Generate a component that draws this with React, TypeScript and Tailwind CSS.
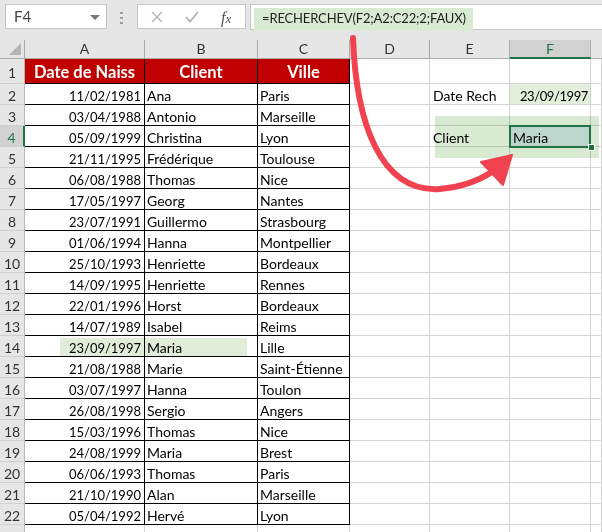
import React from "react";

const rows: [string, string, string][] = [
  ["11/02/1981", "Ana", "Paris"],
  ["03/04/1988", "Antonio", "Marseille"],
  ["05/09/1999", "Christina", "Lyon"],
  ["21/11/1995", "Frédérique", "Toulouse"],
  ["06/08/1988", "Thomas", "Nice"],
  ["17/05/1997", "Georg", "Nantes"],
  ["23/07/1991", "Guillermo", "Strasbourg"],
  ["01/06/1994", "Hanna", "Montpellier"],
  ["25/10/1993", "Henriette", "Bordeaux"],
  ["14/09/1995", "Henriette", "Rennes"],
  ["22/01/1996", "Horst", "Bordeaux"],
  ["14/07/1989", "Isabel", "Reims"],
  ["23/09/1997", "Maria", "Lille"],
  ["21/08/1988", "Marie", "Saint-Étienne"],
  ["03/07/1997", "Hanna", "Toulon"],
  ["26/08/1998", "Sergio", "Angers"],
  ["15/03/1996", "Thomas", "Nice"],
  ["24/08/1999", "Maria", "Brest"],
  ["06/06/1993", "Thomas", "Paris"],
  ["21/10/1990", "Alan", "Marseille"],
  ["05/04/1992", "Hervé", "Lyon"],
];

const font = { fontFamily: "Lato, 'Open Sans', sans-serif" };

function RowHeader({ n, h, label = true }: { n: number; h: string; label?: boolean }) {
  const sel = n === 4;
  return (
    <div
      className={`${h} w-[25px] shrink-0 flex items-end justify-center text-[14px] leading-[16px] border-b border-b-[#d0d0d0] ${
        sel
          ? "bg-[#d2d2d2] text-[#217346] border-r-2 border-r-[#217346]"
          : "bg-[#e6e6e6] text-[#333] border-r border-r-[#b8b8b8]"
      }`}
    >
      {label ? n : null}
    </div>
  );
}

function Gray({
  w,
  children,
  cls = "",
  size = "text-[14px]",
}: {
  w: string;
  children?: React.ReactNode;
  cls?: string;
  size?: string;
}) {
  return (
    <div
      className={`${w} shrink-0 h-full border-r border-b border-[#d4d4d4] flex items-end ${size} leading-[16px] text-black whitespace-nowrap ${cls}`}
    >
      {children}
    </div>
  );
}

export default function App() {
  return (
    <div
      className="relative w-[602px] h-[532px] overflow-hidden bg-white select-none"
      style={font}
    >
      {/* Formula bar */}
      <div className="h-[40px] bg-[#e6e6e6] relative">
        <div className="absolute left-[5px] top-[4px] w-[102px] h-[25px] bg-white border border-[#c6c6c6] flex items-center pl-[8px] text-[15px] text-[#444]">
          F4
          <svg className="absolute right-[6px] top-[10px]" width="10" height="6" viewBox="0 0 10 6">
            <polygon points="0,0 10,0 5,5" fill="#777" />
          </svg>
        </div>
        <div className="absolute left-[120px] top-[12px] flex flex-col gap-[3px]">
          <div className="w-[3px] h-[2px] bg-[#a0a0a0]" />
          <div className="w-[3px] h-[2px] bg-[#a0a0a0]" />
          <div className="w-[3px] h-[2px] bg-[#a0a0a0]" />
        </div>
        <div className="absolute left-[137px] top-[4px] w-[109px] h-[25px] bg-white border border-[#c6c6c6]">
          <svg className="absolute left-[13px] top-[6px]" width="12" height="12" viewBox="0 0 12 12">
            <path d="M1 1 L11 11 M11 1 L1 11" stroke="#b4b4b4" strokeWidth="1.4" fill="none" />
          </svg>
          <svg className="absolute left-[47px] top-[6px]" width="14" height="12" viewBox="0 0 14 12">
            <path d="M1 6 L5 10.5 L13 1" stroke="#b4b4b4" strokeWidth="1.8" fill="none" />
          </svg>
          <span
            className="absolute left-[83px] top-[1px] text-[16px] italic text-[#555]"
            style={{ fontFamily: "'Liberation Serif', serif" }}
          >
            f<span className="text-[13px]">x</span>
          </span>
        </div>
        <div className="absolute left-[250px] top-[4px] right-[-2px] h-[26px] bg-white border border-[#c6c6c6]" />
        <div className="absolute left-[254px] top-[8px] w-[219px] h-[23px] bg-[#d9ead3]" />
        <div className="absolute left-[262px] top-[7px] text-[13px] tracking-[-0.15px] text-[#222] leading-[22px]">
          =RECHERCHEV(F2;A2:C22;2;FAUX)
        </div>
      </div>

      {/* Column headers */}
      <div className="flex h-[19px] bg-[#e6e6e6] text-[14px] text-[#333]">
        <div className="w-[25px] shrink-0 h-full relative border-r border-b border-[#ababab]">
          <svg className="absolute right-[3px] bottom-[3px]" width="12" height="12" viewBox="0 0 12 12">
            <polygon points="12,0 12,12 0,12" fill="#b4b4b4" />
          </svg>
        </div>
        {[
          ["A", "w-[120px]"],
          ["B", "w-[113px]"],
          ["C", "w-[92px]"],
          ["D", "w-[80px]"],
          ["E", "w-[80px]"],
        ].map(([l, w]) => (
          <div
            key={l}
            className={`${w} shrink-0 h-full flex items-center justify-center border-r border-b border-[#ababab] leading-none`}
          >
            {l}
          </div>
        ))}
        <div className="w-[81px] shrink-0 h-full flex items-center justify-center bg-[#d2d2d2] text-[#217346] border-r border-r-[#ababab] border-b-2 border-b-[#217346] leading-none">
          F
        </div>
        <div className="flex-1 h-full border-b border-[#ababab]" />
      </div>

      {/* Row 1 */}
      <div className="flex h-[25px]">
        <RowHeader n={1} h="h-[25px] pb-[2px]" />
        {[
          ["Date de Naiss", "w-[120px]"],
          ["Client", "w-[113px]"],
          ["Ville", "w-[92px]"],
        ].map(([t, w]) => (
          <div
            key={t}
            className={`${w} shrink-0 h-full bg-[#c00000] border-r border-b border-black flex items-end justify-center text-white font-bold text-[16.5px] leading-[22px] overflow-hidden whitespace-nowrap`}
          >
            {t}
          </div>
        ))}
        <Gray w="w-[80px]" />
        <Gray w="w-[80px]" />
        <Gray w="w-[81px]" />
        <Gray w="flex-1" />
      </div>

      {/* Rows 2-23 */}
      {[...rows, null].map((r, i) => {
        const n = i + 2;
        return (
          <div key={n} className="flex h-[21px]">
            <RowHeader n={n} h="h-[21px]" label={n <= 22} />
            {r ? (
              <>
                <div className="w-[120px] shrink-0 h-full border-r border-b border-black flex items-end justify-end pr-[3px] text-[13px] leading-[16px] text-black">
                  {r[0]}
                </div>
                <div className="w-[113px] shrink-0 h-full border-r border-b border-black flex items-end pl-[2px] text-[14px] leading-[16px] text-black">
                  {r[1]}
                </div>
                <div className="w-[92px] shrink-0 h-full border-r border-b border-black flex items-end pl-[2px] text-[14px] leading-[16px] text-black whitespace-nowrap">
                  {r[2]}
                </div>
              </>
            ) : (
              <>
                <Gray w="w-[120px]" />
                <Gray w="w-[113px]" />
                <Gray w="w-[92px]" />
              </>
            )}
            <Gray w="w-[80px]" />
            <Gray w="w-[80px]" cls="pl-[3px]">
              {n === 2 ? "Date Rech" : n === 4 ? "Client" : null}
            </Gray>
            <Gray
              w="w-[81px]"
              size={n === 2 ? "text-[13px]" : "text-[14px]"}
              cls={
                n === 2
                  ? "bg-[#e2efda] justify-end pr-[2px] tracking-[-0.4px]"
                  : n === 4
                  ? "bg-[#deebfb] pl-[3px]"
                  : ""
              }
            >
              {n === 2 ? "23/09/1997" : n === 4 ? "Maria" : null}
            </Gray>
            <Gray w="flex-1" />
          </div>
        );
      })}

      {/* Highlight overlays (shapes drawn over the sheet) */}
      <div className="absolute left-[60px] top-[338px] w-[187px] h-[19px] bg-[#e0eed9] mix-blend-multiply pointer-events-none" />
      <div className="absolute left-[435px] top-[116px] w-[164px] h-[42px] bg-[#d9ead3] mix-blend-multiply pointer-events-none" />

      {/* Active cell border */}
      <div className="absolute left-[509px] top-[125px] w-[82px] h-[23px] border-2 border-[#217346] pointer-events-none" />
      <div className="absolute left-[588px] top-[144px] w-[7px] h-[7px] bg-[#217346] border border-white pointer-events-none" />

      {/* Arrow */}
      <svg className="absolute left-0 top-0 pointer-events-none" width="602" height="532" viewBox="0 0 602 532">
        <path
          d="M353 38 C 356 122 380 193 440 189 C 463 187 478 181 492 172"
          stroke="#f0434f"
          strokeWidth="6"
          strokeLinecap="round"
          fill="none"
        />
        <polygon points="512,155 481,162 503,185" fill="#f0434f" strokeLinejoin="round" stroke="#f0434f" strokeWidth="2" />
      </svg>
    </div>
  );
}
